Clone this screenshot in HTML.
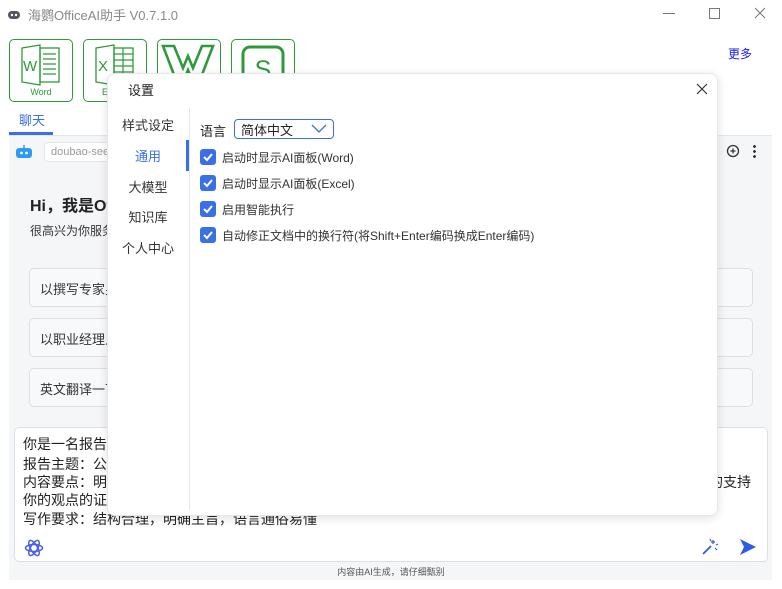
<!DOCTYPE html>
<html><head><meta charset="utf-8"><style>
*{margin:0;padding:0;box-sizing:border-box}
body{width:782px;height:589px;background:#fff;position:relative;overflow:hidden;font-family:"Liberation Sans","Noto Sans CJK SC",sans-serif;color:#222}
.a{position:absolute}
.ib{position:absolute;top:39px;width:64px;height:63px;border:1.5px solid #2f9a3a;border-radius:5px;background:#fff}
.card{position:absolute;left:29px;width:724px;height:39px;border:1px solid #dcdfe6;border-radius:5px;background:#f8f9fb;font-size:13px;padding:10px 10px;color:#333}
.cb{position:absolute;left:200px;width:16px;height:16px;background:#3b6fe8;border-radius:3px}
.cbt{position:absolute;left:222px;font-size:12px;color:#333}
.nav{position:absolute;left:107px;width:82px;text-align:center;font-size:13px;color:#333}
.ln{position:absolute;left:23px;font-size:14px;color:#222}
</style></head><body>
<svg class="a" style="left:7px;top:8px" width="14" height="12" viewBox="0 0 14 12"><rect x="1" y="3" width="12" height="8" rx="4" fill="#556"/><circle cx="5" cy="7" r="1.2" fill="#fff"/><circle cx="9" cy="7" r="1.2" fill="#fff"/></svg>
<div class="a" style="left:28px;top:5px;font-size:13px;color:#888">海鹦OfficeAI助手 V0.7.1.0</div>
<div class="a" style="left:663px;top:13px;width:12px;height:1px;background:#777"></div>
<div class="a" style="left:709px;top:8px;width:11px;height:11px;border:1px solid #777"></div>
<svg class="a" style="left:754px;top:7px" width="12" height="12"><path d="M1 1L11 11M11 1L1 11" stroke="#777"/></svg>

<div class="ib" style="left:9px"><svg width="61" height="60" style="position:absolute;left:0;top:0"><path d="M12 8L30 5V45L12 42Z" fill="none" stroke="#2f9a3a" stroke-width="1.3"/><rect x="30" y="8" width="19" height="34" fill="none" stroke="#2f9a3a" stroke-width="1.3"/><path d="M33 14h13M33 19h13M33 24h13M33 29h13M33 34h13" stroke="#2f9a3a" stroke-width="1.2"/><text x="13" y="31" font-size="15" fill="#2f9a3a" font-family="Liberation Sans">W</text><text x="31" y="55" font-size="9" fill="#2f9a3a" text-anchor="middle" font-family="Liberation Sans">Word</text></svg></div>
<div class="ib" style="left:83px"><svg width="61" height="60" style="position:absolute;left:0;top:0"><path d="M12 8L30 5V45L12 42Z" fill="none" stroke="#2f9a3a" stroke-width="1.3"/><rect x="30" y="8" width="19" height="34" fill="none" stroke="#2f9a3a" stroke-width="1.3"/><path d="M30 14h19M30 20h19M30 26h19M30 32h19M30 38h19M39 8v34" stroke="#2f9a3a" stroke-width="1.2"/><text x="14" y="31" font-size="15" fill="#2f9a3a" font-family="Liberation Sans">X</text><text x="18" y="55" font-size="9" fill="#2f9a3a" font-family="Liberation Sans">E</text></svg></div>
<div class="ib" style="left:157px"><svg width="61" height="60" style="position:absolute;left:0;top:0"><path d="M5 6h11l9 22 5-12 5 12 9-22h11L42 40h-8l-4-10-4 10h-8z" fill="none" stroke="#2f9a3a" stroke-width="2.6"/></svg></div>
<div class="ib" style="left:231px"><svg width="61" height="60" style="position:absolute;left:0;top:0"><rect x="11" y="7" width="40" height="40" rx="7" fill="none" stroke="#2f9a3a" stroke-width="3"/><text x="31" y="38" font-size="25" fill="#2f9a3a" text-anchor="middle" font-family="Liberation Sans">S</text></svg></div>
<div class="a" style="left:728px;top:45px;font-size:12px;color:#1a1aee">更多</div>
<div class="a" style="left:19px;top:110px;font-size:13px;color:#3b6fe8">聊天</div>
<div class="a" style="left:9px;top:132px;width:44px;height:3px;background:#3b6fe8"></div>

<div class="a" style="left:9px;top:135px;width:763px;height:445px;background:#f5f6f8;border-top:1px solid #e4e6ea"></div>
<svg class="a" style="left:14px;top:144px" width="20" height="16"><rect x="2" y="4" width="16" height="10" rx="3" fill="#2d9cf0"/><circle cx="7.5" cy="9" r="1.4" fill="#fff"/><circle cx="12.5" cy="9" r="1.4" fill="#fff"/><path d="M10 1v3" stroke="#2d9cf0" stroke-width="1.5"/></svg>
<div class="a" style="left:44px;top:142px;width:120px;height:20px;border:1px solid #e2e4e8;border-radius:4px;background:#fff;font-size:11px;color:#999;padding:3px 6px">doubao-seed</div>
<svg class="a" style="left:726px;top:144px" width="14" height="14"><circle cx="7" cy="7" r="5.5" fill="none" stroke="#333" stroke-width="1.3"/><path d="M7 4.5v5M4.5 7h5" stroke="#333" stroke-width="1.3"/></svg>
<div class="a" style="left:753px;top:144px;width:3px;height:14px;background:radial-gradient(circle,#333 1.3px,transparent 1.5px) 0 0/3px 5px"></div>
<div class="a" style="left:30px;top:192px;font-size:16px;font-weight:bold;color:#222">Hi，我是Of</div>
<div class="a" style="left:30px;top:222px;font-size:12px;color:#333">很高兴为你服务</div>
<div class="card" style="top:268px">以撰写专家身</div>
<div class="card" style="top:318px">以职业经理人</div>
<div class="card" style="top:368px">英文翻译一下</div>

<div class="a" style="left:14px;top:427px;width:754px;height:135px;background:#fff;border:1px solid #dcdfe6;border-radius:5px"></div>
<div class="ln" style="top:434px">你是一名报告</div>
<div class="ln" style="top:454px">报告主题：公</div>
<div class="ln" style="top:472px">内容要点：明</div>
<div class="ln" style="left:709px;top:472px">的支持</div>
<div class="ln" style="top:490px">你的观点的证</div>
<div class="ln" style="top:509px">写作要求：结构合理，明确主旨，语言通俗易懂</div>
<svg class="a" style="left:24px;top:538px" width="20" height="20" viewBox="0 0 20 20"><g fill="none" stroke="#4a5bf0" stroke-width="1.5"><ellipse cx="10" cy="10" rx="8.5" ry="3.5"/><ellipse cx="10" cy="10" rx="8.5" ry="3.5" transform="rotate(60 10 10)"/><ellipse cx="10" cy="10" rx="8.5" ry="3.5" transform="rotate(-60 10 10)"/></g></svg>
<svg class="a" style="left:701px;top:538px" width="18" height="18"><path d="M2 16L10 8" stroke="#2f5be8" stroke-width="1.8"/><path d="M12 2v4M10 4h4M15 7l2-1M14 10l2 2M9 1l1 2" stroke="#2f5be8" stroke-width="1.2"/></svg>
<svg class="a" style="left:739px;top:538px" width="18" height="18"><path d="M1 1L17 9L1 17L5 9z" fill="#2f5be8"/></svg>
<div class="a" style="left:0;width:782px;top:565px;text-align:center;font-size:9px;color:#555">内容由AI生成，请仔细甄别</div>

<div class="a" style="left:107px;top:73px;width:611px;height:443px;background:#fff;border:1px solid #e4e6ea;border-radius:8px;box-shadow:0 2px 10px rgba(0,0,0,.12)"></div>
<div class="a" style="left:128px;top:80px;font-size:13px;color:#222">设置</div>
<svg class="a" style="left:696px;top:83px" width="12" height="12"><path d="M1 1L11 11M11 1L1 11" stroke="#333" stroke-width="1.2"/></svg>
<div class="a" style="left:189px;top:108px;width:1px;height:402px;background:#e4e6ea"></div>
<div class="a" style="left:186px;top:140px;width:3px;height:31px;background:#3b6fe8"></div>
<div class="nav" style="top:115px">样式设定</div>
<div class="nav" style="top:146px;color:#3b6fe8">通用</div>
<div class="nav" style="top:177px">大模型</div>
<div class="nav" style="top:207px">知识库</div>
<div class="nav" style="top:238px">个人中心</div>
<div class="a" style="left:200px;top:121px;font-size:13px;color:#222">语言</div>
<div class="a" style="left:234px;top:119px;width:100px;height:20px;border:1px solid #3b6fe8;border-radius:4px;font-size:13px;padding:0 6px;color:#222">简体中文</div>
<svg class="a" style="left:311px;top:124px" width="16" height="10"><path d="M1 1L8 8L15 1" fill="none" stroke="#3b6fe8" stroke-width="1.3"/></svg>
<div class="cb" style="top:149px"></div><div class="cbt" style="top:149px">启动时显示AI面板(Word)</div>
<div class="cb" style="top:175px"></div><div class="cbt" style="top:175px">启动时显示AI面板(Excel)</div>
<div class="cb" style="top:201px"></div><div class="cbt" style="top:201px">启用智能执行</div>
<div class="cb" style="top:227px"></div><div class="cbt" style="top:227px">自动修正文档中的换行符(将Shift+Enter编码换成Enter编码)</div>
<svg class="a" style="left:200px;top:149px" width="16" height="96"><g fill="none" stroke="#fff" stroke-width="2"><path d="M4 8l3 3 5-6"/><path d="M4 34l3 3 5-6"/><path d="M4 60l3 3 5-6"/><path d="M4 86l3 3 5-6"/></g></svg>
</body></html>
